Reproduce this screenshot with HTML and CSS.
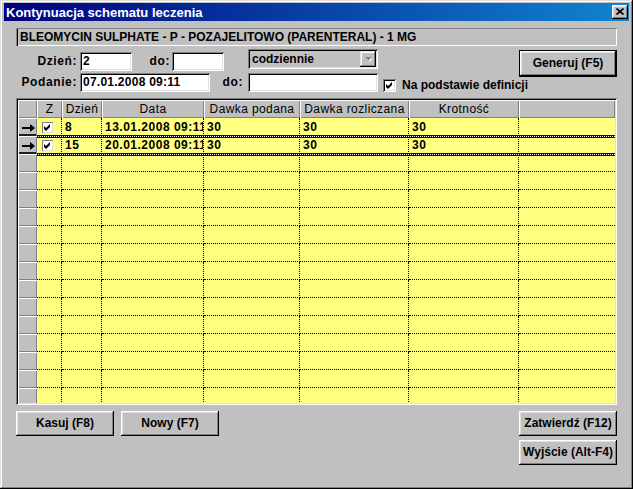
FILE: index.html
```html
<!DOCTYPE html>
<html lang="pl">
<head>
<meta charset="utf-8">
<title>Kontynuacja schematu leczenia</title>
<link rel="stylesheet" href="styles.css">
</head>
<body>
<div class="window">
  <div class="titlebar">
    <span class="title">Kontynuacja schematu leczenia</span>
    <span class="close-btn"><svg width="8" height="7" viewBox="0 0 8 7"><path d="M0.5 0.5L7.5 6.5M7.5 0.5L0.5 6.5" stroke="#000" stroke-width="1.7"/></svg></span>
  </div>
  <div class="content">
    <div class="drug">BLEOMYCIN SULPHATE - P - POZAJELITOWO (PARENTERAL) - 1 MG</div>

    <div class="form">
      <div class="form-left">
        <div class="frow frow1">
          <span class="lbl lbl-main">Dzień:</span>
          <span class="input w-short">2</span>
          <span class="lbl lbl-do1">do:</span>
          <span class="input w-short"></span>
          <span class="select">
            <span class="select-text">codziennie</span>
            <span class="select-btn"><svg width="7" height="5" viewBox="0 0 7 5"><polygon points="1,1 8,1 4.5,4.5" fill="#fff"/><polygon points="0,0 7,0 3.5,3.5" fill="#808080"/></svg></span>
          </span>
        </div>
        <div class="frow frow2">
          <span class="lbl lbl-main">Podanie:</span>
          <span class="input w-long">07.01.2008 09:11</span>
          <span class="lbl lbl-do2">do:</span>
          <span class="input w-long"></span>
          <span class="check-wrap">
            <span class="checkbox"><svg width="7" height="7" viewBox="0 0 7 7"><polygon points="0,2 2,4 6,0 6,3 2,7 0,5" fill="#000"/></svg></span>
            <span class="cb-label">Na podstawie definicji</span>
          </span>
        </div>
      </div>
      <span class="btn btn-default">Generuj (F5)</span>
    </div>

    <div class="grid">
      <div class="grid-inner">
        <div class="grow ghead">
          <span class="hcell"></span>
          <span class="hcell">Z</span>
          <span class="hcell">Dzień</span>
          <span class="hcell">Data</span>
          <span class="hcell">Dawka podana</span>
          <span class="hcell">Dawka rozliczana</span>
          <span class="hcell">Krotność</span>
          <span class="hcell"></span>
        </div>
        <div class="grow sel">
          <span class="ind ind-sel"><svg width="13" height="8" viewBox="0 0 13 8"><rect x="0" y="3" width="10" height="2" fill="#000"/><polygon points="8,0 13,4 8,8" fill="#000"/></svg></span>
          <span class="cell"><span class="gcheck"><svg width="7" height="7" viewBox="0 0 7 7"><polygon points="0,2 2,4 6,0 6,3 2,7 0,5" fill="#000"/></svg></span></span>
          <span class="cell">8</span>
          <span class="cell">13.01.2008 09:11</span>
          <span class="cell">30</span>
          <span class="cell">30</span>
          <span class="cell">30</span>
          <span class="cell last"></span>
        </div>
        <div class="grow sel">
          <span class="ind ind-sel"><svg width="13" height="8" viewBox="0 0 13 8"><rect x="0" y="3" width="10" height="2" fill="#000"/><polygon points="8,0 13,4 8,8" fill="#000"/></svg></span>
          <span class="cell"><span class="gcheck"><svg width="7" height="7" viewBox="0 0 7 7"><polygon points="0,2 2,4 6,0 6,3 2,7 0,5" fill="#000"/></svg></span></span>
          <span class="cell">15</span>
          <span class="cell">20.01.2008 09:11</span>
          <span class="cell">30</span>
          <span class="cell">30</span>
          <span class="cell">30</span>
          <span class="cell last"></span>
        </div>
        <div class="grow"><span class="ind"></span><span class="cell"></span><span class="cell"></span><span class="cell"></span><span class="cell"></span><span class="cell"></span><span class="cell"></span><span class="cell last"></span></div>
        <div class="grow"><span class="ind"></span><span class="cell"></span><span class="cell"></span><span class="cell"></span><span class="cell"></span><span class="cell"></span><span class="cell"></span><span class="cell last"></span></div>
        <div class="grow"><span class="ind"></span><span class="cell"></span><span class="cell"></span><span class="cell"></span><span class="cell"></span><span class="cell"></span><span class="cell"></span><span class="cell last"></span></div>
        <div class="grow"><span class="ind"></span><span class="cell"></span><span class="cell"></span><span class="cell"></span><span class="cell"></span><span class="cell"></span><span class="cell"></span><span class="cell last"></span></div>
        <div class="grow"><span class="ind"></span><span class="cell"></span><span class="cell"></span><span class="cell"></span><span class="cell"></span><span class="cell"></span><span class="cell"></span><span class="cell last"></span></div>
        <div class="grow"><span class="ind"></span><span class="cell"></span><span class="cell"></span><span class="cell"></span><span class="cell"></span><span class="cell"></span><span class="cell"></span><span class="cell last"></span></div>
        <div class="grow"><span class="ind"></span><span class="cell"></span><span class="cell"></span><span class="cell"></span><span class="cell"></span><span class="cell"></span><span class="cell"></span><span class="cell last"></span></div>
        <div class="grow"><span class="ind"></span><span class="cell"></span><span class="cell"></span><span class="cell"></span><span class="cell"></span><span class="cell"></span><span class="cell"></span><span class="cell last"></span></div>
        <div class="grow"><span class="ind"></span><span class="cell"></span><span class="cell"></span><span class="cell"></span><span class="cell"></span><span class="cell"></span><span class="cell"></span><span class="cell last"></span></div>
        <div class="grow"><span class="ind"></span><span class="cell"></span><span class="cell"></span><span class="cell"></span><span class="cell"></span><span class="cell"></span><span class="cell"></span><span class="cell last"></span></div>
        <div class="grow"><span class="ind"></span><span class="cell"></span><span class="cell"></span><span class="cell"></span><span class="cell"></span><span class="cell"></span><span class="cell"></span><span class="cell last"></span></div>
        <div class="grow"><span class="ind"></span><span class="cell"></span><span class="cell"></span><span class="cell"></span><span class="cell"></span><span class="cell"></span><span class="cell"></span><span class="cell last"></span></div>
        <div class="grow"><span class="ind"></span><span class="cell"></span><span class="cell"></span><span class="cell"></span><span class="cell"></span><span class="cell"></span><span class="cell"></span><span class="cell last"></span></div>
        <div class="grow"><span class="ind"></span><span class="cell"></span><span class="cell"></span><span class="cell"></span><span class="cell"></span><span class="cell"></span><span class="cell"></span><span class="cell last"></span></div>
      </div>
    </div>

    <div class="actions">
      <div class="actions-left">
        <span class="btn">Kasuj (F8)</span>
        <span class="btn">Nowy (F7)</span>
      </div>
      <div class="actions-right">
        <span class="btn">Zatwierdź (F12)</span>
        <span class="btn">Wyjście (Alt-F4)</span>
      </div>
    </div>
  </div>
</div>
</body>
</html>
```

FILE: styles.css
```css
* { box-sizing: border-box; }
html, body { margin: 0; padding: 0; }
body {
  width: 633px;
  height: 489px;
  overflow: hidden;
  background: #c0c0c0;
  font-family: "Liberation Sans", Arial, sans-serif;
  font-size: 12px;
  font-weight: bold;
  color: #000;
}
.window {
  width: 633px;
  height: 489px;
  padding: 3px 4px 4px 4px;
  background: #c0c0c0;
  box-shadow: inset -1px -1px #000, inset 1px 1px #dfdfdf, inset -2px -2px #808080, inset 2px 2px #fff;
}
.titlebar {
  height: 18px;
  display: flex;
  align-items: center;
  justify-content: space-between;
  padding: 0 1px 0 2px;
  background: linear-gradient(to right, #000080, #1084d0);
}
.title {
  color: #fff;
  font-size: 13px;
  font-weight: bold;
  white-space: nowrap;
}
.close-btn {
  width: 16px;
  height: 14px;
  display: flex;
  align-items: center;
  justify-content: center;
  padding: 0 1px 1px 0;
  background: #c0c0c0;
  box-shadow: inset -1px -1px #000, inset 1px 1px #fff, inset -2px -2px #808080, inset 2px 2px #dfdfdf;
}
.close-btn svg { display: block; }
.content { padding: 7px 12px 0 12px; }

.drug {
  height: 18px;
  padding-left: 4px;
  line-height: 18px;
  white-space: nowrap;
  box-shadow: inset 1px 1px #808080, inset 2px 0 #000, inset -1px -1px #fff;
}

.form {
  display: flex;
  justify-content: space-between;
  align-items: flex-start;
  margin-top: 2px;
}
.form-left { flex: 0 1 auto; min-width: 0; }
.frow { display: flex; }
.frow1 { height: 23px; align-items: flex-end; }
.frow2 { height: 19px; margin-top: 2px; align-items: flex-end; }
.lbl {
  flex-shrink: 0;
  height: 19px;
  line-height: 19px;
  text-align: right;
  white-space: nowrap;
  letter-spacing: 0.6px;
}
.lbl-main { width: 64px; padding-right: 3px; }
.lbl-do1 { width: 40px; padding-right: 2px; }
.lbl-do2 { width: 38px; padding-right: 5px; }
.input {
  flex-shrink: 0;
  height: 19px;
  line-height: 19px;
  padding: 0 3px;
  background: #fff;
  white-space: nowrap;
  letter-spacing: 0.25px;
  box-shadow: inset 1px 1px #808080, inset -1px -1px #fff, inset 2px 2px #000, inset -2px -2px #dfdfdf;
}
.w-short { width: 52px; }
.w-long { width: 130px; }
.select {
  flex-shrink: 0;
  align-self: flex-start;
  margin-top: 1px;
  margin-left: 24px;
  width: 130px;
  height: 20px;
  padding: 2px 2px 2px 4px;
  display: flex;
  align-items: center;
  justify-content: space-between;
  background: #c0c0c0;
  box-shadow: inset 1px 1px #808080, inset -1px -1px #fff, inset 2px 2px #000, inset -2px -2px #dfdfdf;
}
.select-text { line-height: 16px; }
.select-btn {
  width: 16px;
  height: 16px;
  display: flex;
  align-items: center;
  justify-content: center;
  background: #c0c0c0;
  box-shadow: inset -1px -1px #000, inset 1px 1px #dfdfdf, inset -2px -2px #808080, inset 2px 2px #fff;
}
.select-btn svg { display: block; }
.check-wrap {
  flex-shrink: 0;
  display: flex;
  align-items: center;
  align-self: flex-start;
  margin-top: 6px;
  margin-left: 5px;
  height: 13px;
}
.checkbox {
  width: 13px;
  height: 13px;
  display: flex;
  align-items: center;
  justify-content: center;
  background: #fff;
  box-shadow: inset 1px 1px #808080, inset -1px -1px #fff, inset 2px 2px #000, inset -2px -2px #dfdfdf;
}
.checkbox svg, .gcheck svg { display: block; }
.cb-label { margin-left: 6px; line-height: 13px; white-space: nowrap; }

.btn {
  flex-shrink: 0;
  display: flex;
  align-items: center;
  justify-content: center;
  width: 98px;
  height: 25px;
  padding-bottom: 1px;
  background: #c0c0c0;
  white-space: nowrap;
  box-shadow: inset -1px -1px #000, inset 1px 1px #fff, inset -2px -2px #808080, inset 2px 2px #dfdfdf;
}
.btn-default {
  height: 27px;
  margin-top: 2px;
  border: 1px solid #000;
}

.grid {
  margin-top: 6px;
  height: 307px;
  padding: 2px;
  background: #c0c0c0;
  box-shadow: inset 1px 1px #808080, inset -1px -1px #fff, inset 2px 2px #000, inset -2px -2px #dfdfdf;
}
.grid-inner {
  height: 303px;
  overflow: hidden;
}
.grow {
  position: relative;
  display: grid;
  grid-template-columns: 19px 25px 40px 102px 96px 109px 110px 96px;
  height: 18px;
}
.hcell {
  height: 18px;
  line-height: 18px;
  text-align: center;
  font-weight: normal;
  letter-spacing: 0.4px;
  white-space: nowrap;
  overflow: hidden;
  background: #c0c0c0;
  box-shadow: inset 1px 1px #fff, inset -1px -1px #808080;
}
.ind {
  height: 18px;
  display: flex;
  align-items: center;
  padding-left: 4px;
  padding-top: 1px;
  background: #c0c0c0;
  box-shadow: inset 1px 1px #fff, inset -1px -1px #808080;
}
.ind-sel {
  box-shadow: inset 1px 1px #fff, inset -1px 0 #808080, inset 0 -2px #202020;
}
.ind svg { display: block; }
.cell {
  height: 18px;
  padding-left: 3px;
  line-height: 19px;
  letter-spacing: 0.5px;
  white-space: nowrap;
  overflow: hidden;
  background: #ffff80;
  border-right: 1px dotted #000;
  border-bottom: 1px dotted #000;
}
.cell.last { border-right: none; }
.gcheck {
  display: flex;
  align-items: center;
  justify-content: center;
  width: 11px;
  height: 11px;
  margin: 4px 0 0 2px;
  background: #fff;
  box-shadow: inset 1px 1px #808080, inset -1px -1px #dfdfdf;
}
.grow.sel::after {
  content: "";
  position: absolute;
  left: 19px;
  right: 0;
  bottom: -2px;
  height: 3px;
  z-index: 1;
  background:
    linear-gradient(#000080, #000080) top / 100% 1px no-repeat,
    linear-gradient(#000080, #000080) bottom / 100% 1px no-repeat,
    repeating-linear-gradient(to right, #000080 0 1px, #fff 1px 2px);
}

.actions {
  display: flex;
  justify-content: space-between;
  margin-top: 6px;
}
.actions-left {
  display: flex;
  gap: 7px;
  align-items: flex-start;
}
.actions-right {
  display: flex;
  flex-direction: column;
  gap: 4px;
}
```
